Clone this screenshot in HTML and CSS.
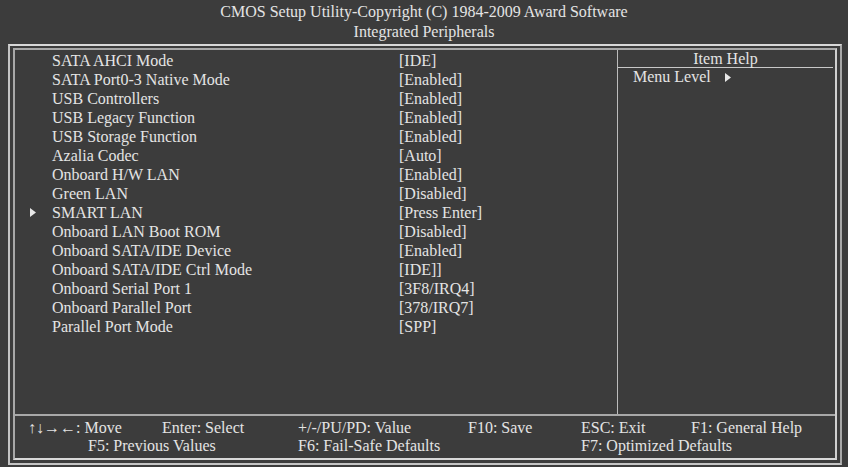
FILE: index.html
```html
<!DOCTYPE html>
<html lang="en">
<head>
    <meta charset="UTF-8">
    <title>CMOS Setup Utility - Integrated Peripherals</title>
    <link rel="stylesheet" href="styles.css">
</head>
<body>

<div class="title">
    <p>CMOS Setup Utility-Copyright (C) 1984-2009 Award Software</p>
    <p>Integrated Peripherals</p>
</div>

<div class="frame">
    <div class="inner">
        <div class="main">
            <div class="items">
                <div class="row"><span class="mark"></span><span>SATA AHCI Mode</span><span>[IDE]</span></div>
                <div class="row"><span class="mark"></span><span>SATA Port0-3 Native Mode</span><span>[Enabled]</span></div>
                <div class="row"><span class="mark"></span><span>USB Controllers</span><span>[Enabled]</span></div>
                <div class="row"><span class="mark"></span><span>USB Legacy Function</span><span>[Enabled]</span></div>
                <div class="row"><span class="mark"></span><span>USB Storage Function</span><span>[Enabled]</span></div>
                <div class="row"><span class="mark"></span><span>Azalia Codec</span><span>[Auto]</span></div>
                <div class="row"><span class="mark"></span><span>Onboard H/W LAN</span><span>[Enabled]</span></div>
                <div class="row"><span class="mark"></span><span>Green LAN</span><span>[Disabled]</span></div>
                <div class="row">
                    <span class="mark"><svg width="6" height="9" viewBox="0 0 6 9"><polygon points="0,0 6,4.5 0,9" fill="#e8e8e8"/></svg></span>
                    <span>SMART LAN</span><span>[Press Enter]</span>
                </div>
                <div class="row"><span class="mark"></span><span>Onboard LAN Boot ROM</span><span>[Disabled]</span></div>
                <div class="row"><span class="mark"></span><span>Onboard SATA/IDE Device</span><span>[Enabled]</span></div>
                <div class="row"><span class="mark"></span><span>Onboard SATA/IDE Ctrl Mode</span><span>[IDE]]</span></div>
                <div class="row"><span class="mark"></span><span>Onboard Serial Port 1</span><span>[3F8/IRQ4]</span></div>
                <div class="row"><span class="mark"></span><span>Onboard Parallel Port</span><span>[378/IRQ7]</span></div>
                <div class="row"><span class="mark"></span><span>Parallel Port Mode</span><span>[SPP]</span></div>
            </div>
            <div class="help">
                <div class="help-head">Item Help</div>
                <div class="help-body">
                    Menu Level
                    <svg class="level-arrow" width="6" height="9" viewBox="0 0 6 9"><polygon points="0,0 6,4.5 0,9" fill="#e8e8e8"/></svg>
                </div>
            </div>
        </div>
        <div class="keys">
            <span class="k1">↑↓→←: Move</span>
            <span class="k2">Enter: Select</span>
            <span class="k3">+/-/PU/PD: Value</span>
            <span class="k4">F10: Save</span>
            <span class="k5">ESC: Exit</span>
            <span class="k6">F1: General Help</span>
            <span class="k7">F5: Previous Values</span>
            <span class="k8">F6: Fail-Safe Defaults</span>
            <span class="k9">F7: Optimized Defaults</span>
        </div>
    </div>
</div>

</body>
</html>
```

FILE: styles.css
```css
body {
    margin: 0;
    padding: 0;
    background-color: #3c3c3c;
    color: #e4e4e4;
    font-family: "Liberation Serif", "Times New Roman", serif;
    font-size: 16px;
    width: 848px;
    height: 467px;
    overflow: hidden;
}

.title {
    height: 44px;
    padding-top: 2px;
    box-sizing: border-box;
    text-align: center;
}

.title p {
    margin: 0;
    line-height: 20px;
}

.frame {
    margin-left: 8px;
    width: 834px;
    height: 421px;
    box-sizing: border-box;
    border: 2px solid #c4c4c4;
    border-top-color: #d8d8d8;
    border-right-color: #a8a8a8;
    padding: 2px 3px 3px 3px;
}

.inner {
    height: 100%;
    box-sizing: border-box;
    border: 2px solid #a8a8a8;
    border-right-color: #d0d0d0;
    border-bottom-color: #d8d8d8;
    display: flex;
    flex-direction: column;
}

.main {
    flex: 1;
    display: flex;
    border-bottom: 2px solid #a8a8a8;
}

.items {
    width: 602px;
    border-right: 1px solid #bcbcbc;
    padding-top: 1px;
}

.row {
    display: grid;
    grid-template-columns: 37px 347px 1fr;
    height: 19px;
    line-height: 19px;
    white-space: nowrap;
}

.mark {
    padding-left: 15px;
    display: flex;
    align-items: center;
}

.help {
    flex: 1;
    padding-right: 2px;
}

.help-head {
    height: 17px;
    line-height: 17px;
    text-align: center;
    border-bottom: 1px solid #c8c8c8;
}

.help-body {
    padding-left: 15px;
    line-height: 18px;
    white-space: nowrap;
}

.level-arrow {
    margin-left: 10px;
}

.keys {
    height: 42px;
    padding: 3px 0 0 13px;
    box-sizing: border-box;
    display: grid;
    grid-template-columns: 60px 74px 136px 170px 113px 110px 1fr;
    grid-auto-rows: 18px;
    line-height: 18px;
    white-space: nowrap;
}

.k1 { grid-column: 1 / 3; grid-row: 1; }
.k2 { grid-column: 3 / 4; grid-row: 1; }
.k3 { grid-column: 4 / 5; grid-row: 1; }
.k4 { grid-column: 5 / 6; grid-row: 1; }
.k5 { grid-column: 6 / 7; grid-row: 1; }
.k6 { grid-column: 7 / 8; grid-row: 1; }
.k7 { grid-column: 2 / 4; grid-row: 2; }
.k8 { grid-column: 4 / 6; grid-row: 2; }
.k9 { grid-column: 6 / 8; grid-row: 2; }
```
